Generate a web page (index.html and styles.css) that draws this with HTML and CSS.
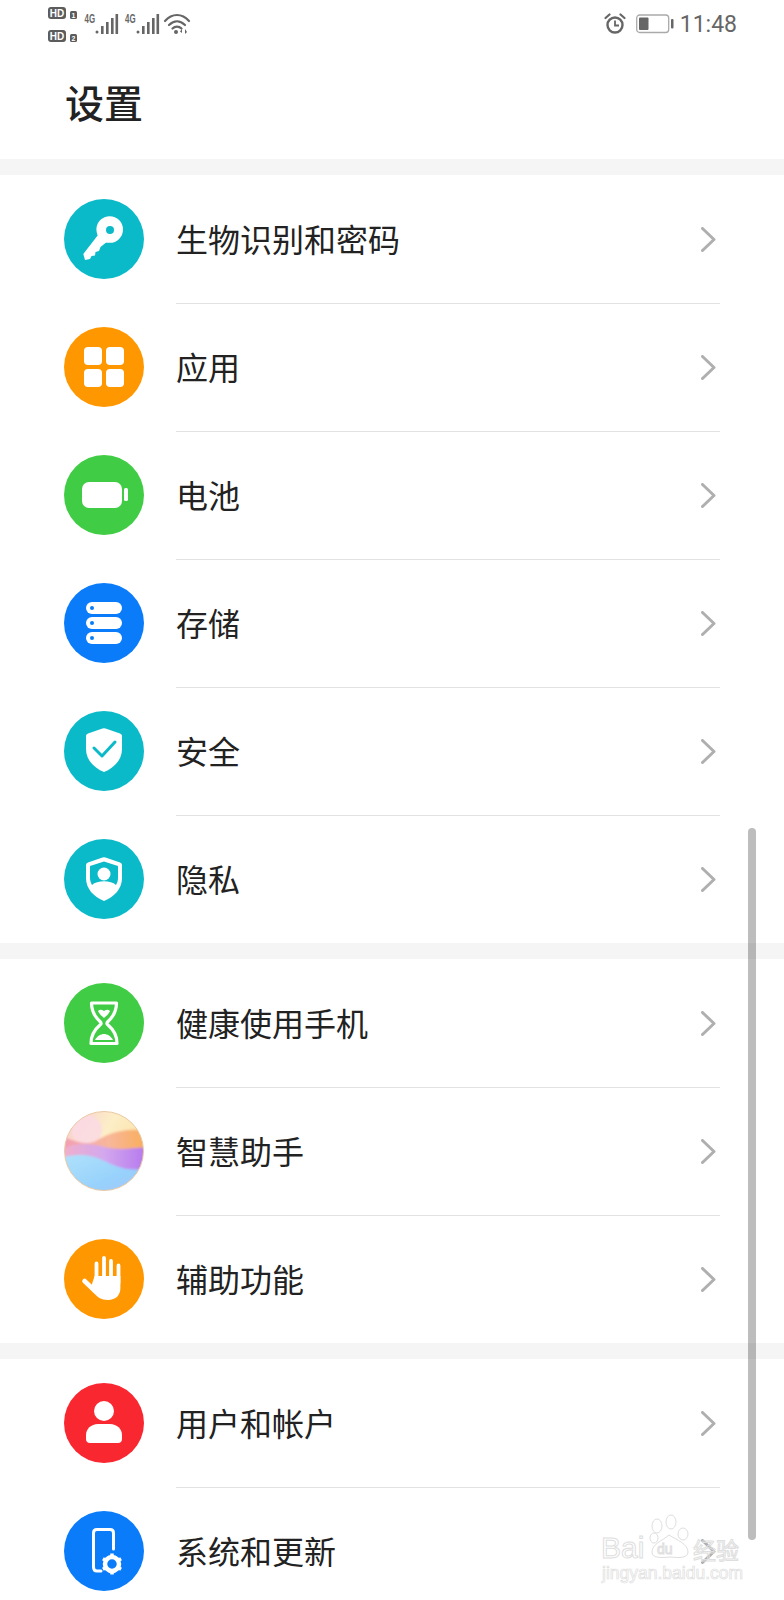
FILE: index.html
```html
<!DOCTYPE html>
<html lang="zh">
<head>
<meta charset="utf-8">
<title>设置</title>
<link rel="stylesheet" href="styles.css">
</head>
<body>
<div class="page">
  <div class="statusbar">
    <svg class="st-left" width="144" height="46" viewBox="48 0 144 46">
      <g fill="#5c5c5c">
        <rect x="48" y="7" width="18" height="12" rx="3"/>
        <rect x="70" y="11" width="7" height="8" rx="1.5"/>
        <rect x="48" y="30" width="18" height="12" rx="3"/>
        <rect x="70" y="34" width="7" height="8" rx="1.5"/>
      </g>
      <g class="st-hd">
        <text x="57" y="17" text-anchor="middle">HD</text>
        <text x="57" y="40" text-anchor="middle">HD</text>
      </g>
      <g class="st-n">
        <text x="73.5" y="18" text-anchor="middle">1</text>
        <text x="73.5" y="41" text-anchor="middle">2</text>
      </g>
      <g class="st-4g">
        <text x="84.500" y="23" textLength="10.500" lengthAdjust="spacingAndGlyphs">4G</text>
        <text x="125" y="23" textLength="10.500" lengthAdjust="spacingAndGlyphs">4G</text>
      </g>
      <g fill="#666">
        <circle cx="97" cy="32" r="1.5"/>
        <rect x="101" y="26" width="2.6" height="8"/><rect x="106" y="22" width="2.6" height="12"/><rect x="111" y="18" width="2.6" height="16"/><rect x="115.5" y="14" width="2.6" height="20"/>
        <circle cx="138" cy="32" r="1.5"/>
        <rect x="142" y="26" width="2.6" height="8"/><rect x="147" y="22" width="2.6" height="12"/><rect x="152" y="18" width="2.6" height="16"/><rect x="156.5" y="14" width="2.6" height="20"/>
      </g>
      <g fill="none" stroke="#666" stroke-width="2.2" stroke-linecap="round">
        <path d="M165 21C172 13 182 13 189 21"/>
        <path d="M169 25C174 20 180 20 185 25"/>
        <path d="M172.5 28.5C175 26 179 26 181.500 28.500"/>
      </g>
      <g fill="#666">
        <circle cx="176" cy="32" r="2"/>
        <path d="M182 29v4l-2-1.500zM185 29v5l2-2z"/>
      </g>
    </svg>
    <div class="st-right">
      <svg width="22" height="22" viewBox="0 0 22 22">
        <circle cx="11" cy="12" r="7.500" fill="none" stroke="#666" stroke-width="2.400"/>
        <path d="M11 7.500V12.500H15" fill="none" stroke="#666" stroke-width="1.800"/>
        <path d="M1.500 5L5.500 1.500M20.500 5L16.500 1.500" stroke="#666" stroke-width="2.200" stroke-linecap="round"/>
      </svg>
      <svg width="38" height="20" viewBox="0 0 38 20">
        <rect x="0.700" y="1" width="32" height="17.500" rx="3" fill="#fff" stroke="#aaa" stroke-width="1.300"/>
        <rect x="3" y="3.500" width="9.500" height="12.500" rx="1" fill="#666"/>
        <rect x="35" y="5" width="2.500" height="9.500" rx="1" fill="#666"/>
      </svg>
      <span class="st-time">11:48</span>
    </div>
  </div>

  <h1 class="title">设置</h1>

  <section class="group">
    <div class="row">
      <svg class="icon" viewBox="0 0 80 80">
        <circle cx="40" cy="40" r="40" fill="#0bbac8"/>
        <circle cx="45.700" cy="30.500" r="13.300" fill="#fff"/>
        <path fill="#fff" d="M34 36L19.300 55L21 61L26 60L27.500 57L31 56.500L31.500 53L35 52L36.500 48L44 42Z"/>
        <circle cx="46" cy="31" r="4" fill="#0bbac8"/>
      </svg>
      <div class="body"><span class="label">生物识别和密码</span><svg class="chev" viewBox="0 0 15 25"><path d="M1.500 1.500L13 12.500L1.500 23.500"/></svg></div>
    </div>
    <div class="row">
      <svg class="icon" viewBox="0 0 80 80">
        <circle cx="40" cy="40" r="40" fill="#ff9800"/>
        <g fill="#fff">
          <rect x="20" y="20" width="18" height="18" rx="4"/><rect x="42" y="20" width="18" height="18" rx="4"/>
          <rect x="20" y="42" width="18" height="18" rx="4"/><rect x="42" y="42" width="18" height="18" rx="4"/>
        </g>
      </svg>
      <div class="body"><span class="label">应用</span><svg class="chev" viewBox="0 0 15 25"><path d="M1.500 1.500L13 12.500L1.500 23.500"/></svg></div>
    </div>
    <div class="row">
      <svg class="icon" viewBox="0 0 80 80">
        <circle cx="40" cy="40" r="40" fill="#41cc45"/>
        <rect x="18" y="27" width="40" height="26" rx="7" fill="#fff"/>
        <rect x="60" y="33" width="4" height="13" rx="1.500" fill="#fff"/>
      </svg>
      <div class="body"><span class="label">电池</span><svg class="chev" viewBox="0 0 15 25"><path d="M1.500 1.500L13 12.500L1.500 23.500"/></svg></div>
    </div>
    <div class="row">
      <svg class="icon" viewBox="0 0 80 80">
        <circle cx="40" cy="40" r="40" fill="#0a7cfa"/>
        <g fill="#fff">
          <rect x="22" y="19" width="36" height="12" rx="6"/><rect x="22" y="34" width="36" height="12" rx="6"/><rect x="22" y="49" width="36" height="12" rx="6"/>
        </g>
        <g fill="#0a7cfa"><circle cx="28" cy="25" r="2"/><circle cx="28" cy="40" r="2"/><circle cx="28" cy="55" r="2"/></g>
      </svg>
      <div class="body"><span class="label">存储</span><svg class="chev" viewBox="0 0 15 25"><path d="M1.500 1.500L13 12.500L1.500 23.500"/></svg></div>
    </div>
    <div class="row">
      <svg class="icon" viewBox="0 0 80 80">
        <circle cx="40" cy="40" r="40" fill="#0bbac8"/>
        <path fill="#fff" d="M38.500 17.500Q40 17 41.500 17.500L56 22.500Q58 23.200 58 25V38C58 49 50 57 40 61C30 57 22 49 22 38V25Q22 23.200 24 22.500Z"/>
        <path fill="none" stroke="#0bbac8" stroke-width="3" stroke-linecap="round" stroke-linejoin="round" d="M30 37L38 45L51 31"/>
      </svg>
      <div class="body"><span class="label">安全</span><svg class="chev" viewBox="0 0 15 25"><path d="M1.500 1.500L13 12.500L1.500 23.500"/></svg></div>
    </div>
    <div class="row">
      <svg class="icon" viewBox="0 0 80 80">
        <circle cx="40" cy="40" r="40" fill="#0bbac8"/>
        <path fill="#fff" d="M38.500 18.500Q40 18 41.500 18.500L56 23.500Q58 24.200 58 26V39C58 50 50 58 40 62C30 58 22 50 22 39V26Q22 24.200 24 23.500Z"/>
        <path fill="#0bbac8" d="M40 22.500L54 27V39C54 42 53 44 52 46C47 41 33 41 28 46C27 44 26 42 26 39V27Z"/>
        <circle cx="40" cy="35" r="6.500" fill="#fff"/>
      </svg>
      <div class="body"><span class="label">隐私</span><svg class="chev" viewBox="0 0 15 25"><path d="M1.500 1.500L13 12.500L1.500 23.500"/></svg></div>
    </div>
  </section>

  <section class="group">
    <div class="row">
      <svg class="icon" viewBox="0 0 80 80">
        <circle cx="40" cy="40" r="40" fill="#41cc45"/>
        <path fill="none" stroke="#fff" stroke-width="3.200" stroke-linejoin="round" d="M27.500 20H52.500C52.500 28 50 33 44 38.500C42.500 40 42.500 41 44 42C50 47 53 53 53 60.500H27C27 53 30 47 36 42C37.500 41 37.500 40 36 38.500C30 33 27.500 28 27.500 20Z"/>
        <path fill="#fff" d="M34 28C36 26 38 27 40 28C42 27 44 26 46 28C45 31 42 33 40 35C38 33 35 31 34 28ZM31 57C33 53 37 51 40 51C43 51 47 53 49 57Z"/>
      </svg>
      <div class="body"><span class="label">健康使用手机</span><svg class="chev" viewBox="0 0 15 25"><path d="M1.500 1.500L13 12.500L1.500 23.500"/></svg></div>
    </div>
    <div class="row">
      <svg class="icon" viewBox="0 0 80 80">
        <defs>
          <clipPath id="orb"><circle cx="40" cy="40" r="39.500"/></clipPath>
          <filter id="soft" x="-10%" y="-10%" width="120%" height="120%"><feGaussianBlur stdDeviation="1"/></filter>
          <linearGradient id="orb-top" x1="0" y1="0" x2="1" y2="0.600"><stop offset="0" stop-color="#f7c4d2"/><stop offset="0.500" stop-color="#fdeec7"/><stop offset="1" stop-color="#fbdc9c"/></linearGradient>
          <linearGradient id="orb-mid" x1="0" y1="0" x2="1" y2="0"><stop offset="0" stop-color="#f29cb8"/><stop offset="0.550" stop-color="#f8b79a"/><stop offset="1" stop-color="#f9ad57"/></linearGradient>
          <linearGradient id="orb-pur" x1="0" y1="0" x2="1" y2="0"><stop offset="0" stop-color="#f2b0c8"/><stop offset="0.500" stop-color="#d3a8ee"/><stop offset="1" stop-color="#b477ef"/></linearGradient>
          <linearGradient id="orb-blue" x1="0" y1="0" x2="1" y2="1"><stop offset="0" stop-color="#b0e2fb"/><stop offset="0.600" stop-color="#97d1fc"/><stop offset="1" stop-color="#a8c4f7"/></linearGradient>
        </defs>
        <g clip-path="url(#orb)">
          <g filter="url(#soft)">
            <rect x="-4" y="-4" width="88" height="88" fill="url(#orb-top)"/>
            <circle cx="23" cy="19" r="15" fill="#fadbe4" opacity=".85"/>
            <path fill="url(#orb-mid)" d="M-4 24C10 30 22 35 32 30C44 22 62 16 84 20V56H-4Z"/>
            <path fill="url(#orb-pur)" d="M-4 40C12 30 28 33 40 36C52 39 66 38 84 36V64H-4Z"/>
            <path fill="url(#orb-blue)" d="M-4 47C14 42 26 44 38 49C50 54 62 62 84 57V84H-4Z"/>
          </g>
        </g>
        <circle cx="40" cy="40" r="39.500" fill="none" stroke="#e9c9a5" stroke-width="1"/>
      </svg>
      <div class="body"><span class="label">智慧助手</span><svg class="chev" viewBox="0 0 15 25"><path d="M1.500 1.500L13 12.500L1.500 23.500"/></svg></div>
    </div>
    <div class="row">
      <svg class="icon" viewBox="0 0 80 80">
        <circle cx="40" cy="40" r="40" fill="#ff9800"/>
        <g stroke="#fff" stroke-width="3.800" stroke-linecap="round" fill="none">
          <path d="M32.500 24.500V42M40 19V42M47 22V42M54.500 26.500V44"/>
          <path stroke-width="4.600" d="M20.500 42L31 52"/>
        </g>
        <path fill="#fff" d="M30.600 37H56.400V49C56.400 56 52 61 44 61C37 61 33 58 29 53L27 48Z"/>
      </svg>
      <div class="body"><span class="label">辅助功能</span><svg class="chev" viewBox="0 0 15 25"><path d="M1.500 1.500L13 12.500L1.500 23.500"/></svg></div>
    </div>
  </section>

  <section class="group">
    <div class="row">
      <svg class="icon" viewBox="0 0 80 80">
        <circle cx="40" cy="40" r="40" fill="#f9272f"/>
        <circle cx="40" cy="28" r="10" fill="#fff"/>
        <path fill="#fff" d="M34 41H46C53 41 58 46 58 52V56C58 58.500 56.500 60 54 60H26C23.500 60 22 58.500 22 56V52C22 46 27 41 34 41Z"/>
      </svg>
      <div class="body"><span class="label">用户和帐户</span><svg class="chev" viewBox="0 0 15 25"><path d="M1.500 1.500L13 12.500L1.500 23.500"/></svg></div>
    </div>
    <div class="row">
      <svg class="icon" viewBox="0 0 80 80">
        <circle cx="40" cy="40" r="40" fill="#0a7cfa"/>
        <path fill="none" stroke="#fff" stroke-width="3" stroke-linecap="round" d="M49.500 38V22C49.500 20 48.500 18.500 46 18.500H33C30.500 18.500 29.500 20 29.500 22V56C29.500 58.500 31 60 33 60H37"/>
        <circle cx="48" cy="53" r="7" fill="none" stroke="#fff" stroke-width="4.500"/>
        <path stroke="#fff" stroke-width="3.500" d="M48 42.500V46M48 60V63.500M38.900 47.800L42 49.500M54 56.500L57.100 58.200M38.900 58.200L42 56.500M54 49.500L57.100 47.800"/>
      </svg>
      <div class="body"><span class="label">系统和更新</span><svg class="chev" viewBox="0 0 15 25"><path d="M1.500 1.500L13 12.500L1.500 23.500"/></svg></div>
    </div>
  </section>

  <div class="scrollbar"></div>

  <svg class="watermark" width="150" height="70" viewBox="600 1514 150 70">
    <g class="wm">
      <text x="601" y="1558" class="wm-bai">Bai</text>
      <ellipse cx="657" cy="1526" rx="5" ry="7"/><ellipse cx="671" cy="1522" rx="5" ry="7"/>
      <ellipse cx="683" cy="1534" rx="5" ry="6"/><ellipse cx="654" cy="1538" rx="4" ry="5"/>
      <path d="M669 1535C677 1540 688 1544 688 1552C688 1558 680 1558 670 1557C660 1558 652 1558 652 1552C652 1544 662 1541 669 1535Z"/>
      <text x="657" y="1554" class="wm-du">du</text>
      <text x="693" y="1559" class="wm-jy">经验</text>
      <text x="602" y="1579" class="wm-url">jingyan.baidu.com</text>
    </g>
  </svg>
</div>
</body>
</html>
```
FILE: styles.css
```css
html, body {
  margin: 0;
  padding: 0;
  background: #fff;
}
.page {
  position: relative;
  width: 784px;
  height: 1600px;
  overflow: hidden;
  background: #fff;
  font-family: "Noto Sans CJK SC", "Noto Sans", sans-serif;
  color: #222;
}
.statusbar {
  height: 46px;
  padding: 0 48px;
  display: flex;
  justify-content: space-between;
  align-items: flex-start;
}
.st-left { display: block; flex: none; }
.st-hd text {
  font: 700 10px "Liberation Sans", sans-serif;
  fill: #fff;
}
.st-n text {
  font: 700 7px "Liberation Sans", sans-serif;
  fill: #fff;
}
.st-4g text {
  font: 700 12px "Liberation Sans", sans-serif;
  fill: #666;
}
.st-right {
  display: flex;
  align-items: center;
  height: 48px;
  gap: 10px;
  margin-right: -1px;
}
.st-time {
  font: 400 23px/1 Roboto, sans-serif;
  color: #666;
  margin-left: -4px;
  margin-top: 1px;
}
.title {
  margin: 0;
  height: 113px;
  padding-left: 65px;
  box-sizing: border-box;
  font-size: 39px;
  font-weight: 500;
  line-height: 110px;
  color: #222;
}
.group {
  border-top: 16px solid #f5f5f5;
}
.row {
  height: 128px;
  display: flex;
  align-items: stretch;
  padding-left: 64px;
}
.icon {
  flex: none;
  width: 80px;
  height: 80px;
  align-self: center;
  margin-right: 32px;
}
.body {
  flex: none;
  width: 544px;
  box-sizing: border-box;
  padding: 0 4px 0 0;
  display: flex;
  align-items: center;
  justify-content: space-between;
  box-shadow: 0 1px 0 #e2e2e2;
}
.row:last-child .body { box-shadow: none; }
.label {
  font-size: 32px;
  line-height: 1;
  color: #222;
  margin-bottom: 2px;
}
.chev {
  width: 15px;
  height: 25px;
  flex: none;
  margin-top: 1px;
  fill: none;
  stroke: #afafaf;
  stroke-width: 3;
  stroke-linecap: round;
  stroke-linejoin: round;
}
.scrollbar {
  position: absolute;
  left: 748px;
  top: 828px;
  width: 8px;
  height: 712px;
  border-radius: 4px;
  background: rgba(0, 0, 0, 0.26);
}
.watermark {
  position: absolute;
  left: 600px;
  top: 1514px;
}
.wm {
  fill: none;
  stroke: #dedede;
  stroke-width: 1;
}
.wm-bai { font: 400 30px "Liberation Sans", sans-serif; }
.wm-du { font: 400 14px "Liberation Sans", sans-serif; }
.wm-jy { font: 400 23px "Noto Sans CJK SC", sans-serif; }
.wm-url { font: 400 17.500px "Liberation Sans", sans-serif; stroke-width: 0.700; }
```
